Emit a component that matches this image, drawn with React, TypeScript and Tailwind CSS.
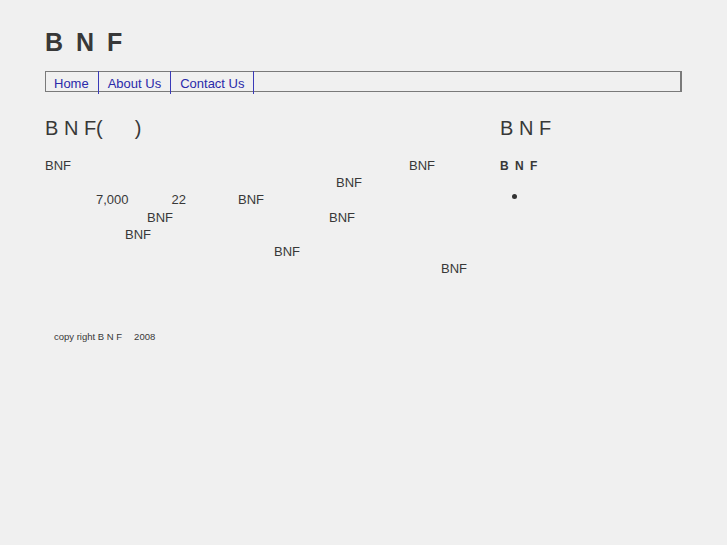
const FONT = { fontFamily: '"Liberation Sans", Arial, "Noto Sans CJK JP", sans-serif' };

// 本文の各行。グリフが出ていない部分は余白で再現する。
const lines: { text: string; ml: number }[][] = [
  [
    { text: "BNF", ml: 0 },
    { text: "BNF", ml: 338 },
  ],
  [{ text: "BNF", ml: 291 }],
  [
    { text: "7,000", ml: 51 },
    { text: "22", ml: 43 },
    { text: "BNF", ml: 52 },
  ],
  [
    { text: "BNF", ml: 102 },
    { text: "BNF", ml: 156 },
  ],
  [{ text: "BNF", ml: 80 }],
  [{ text: "BNF", ml: 229 }],
  [{ text: "BNF", ml: 396 }],
];

const nav = ["Home", "About Us", "Contact Us"];

export default function App() {
  return (
    <div className="min-h-[545px] w-full bg-[#f0f0f0] text-[#383838]" style={FONT}>
      <div className="w-[682px] pl-[45px] pt-[29px]">
        <h1 className="text-[25px] font-bold leading-[26px] tracking-[3px]">B N F</h1>

        <div className="mt-[16px] flex h-[21px] border border-r-2 border-[#7a7a7a]">
          {nav.map((n, i) => (
            <a
              key={n}
              href="#"
              className={[
                "-mt-px h-[23px] border-r border-[#3a3ab8] pr-[9px] pt-px text-[13px] leading-[23px] text-[#2a2aaa]",
                i === 0 ? "pl-[8px]" : "pl-[9px]",
              ].join(" ")}
            >
              {n}
            </a>
          ))}
        </div>

        <div className="mt-[24px] flex">
          <div className="w-[455px]">
            <h2 className="flex text-[20px] leading-[24px]">
              <span>B N F(</span>
              <span className="inline-block w-[32px]" />
              <span>)</span>
            </h2>
            <div className="mt-[17px] text-[13px] leading-[17.2px]">
              {lines.map((ln, i) => (
                <div key={i} className="flex h-[17.2px] whitespace-nowrap">
                  {ln.map((it, j) => (
                    <span key={j} style={{ marginLeft: it.ml }}>
                      {it.text}
                    </span>
                  ))}
                </div>
              ))}
            </div>
          </div>
          <div className="flex-1">
            <h2 className="text-[20px] leading-[24px]">B N F</h2>
            <div className="mt-[18px] text-[12px] font-bold leading-[17.2px] tracking-[1.5px]">B N F</div>
            <div className="mt-[18px] flex h-[6px] items-center pl-[12px]">
              <span className="h-[5px] w-[5px] rounded-full bg-[#333333]" />
            </div>
          </div>
        </div>

        <div className="mt-[54px] pl-[9px] text-[9.5px] leading-[12px]">
          <span>copy right B N F</span>
          <span className="ml-[12px]">2008</span>
        </div>
      </div>
    </div>
  );
}
